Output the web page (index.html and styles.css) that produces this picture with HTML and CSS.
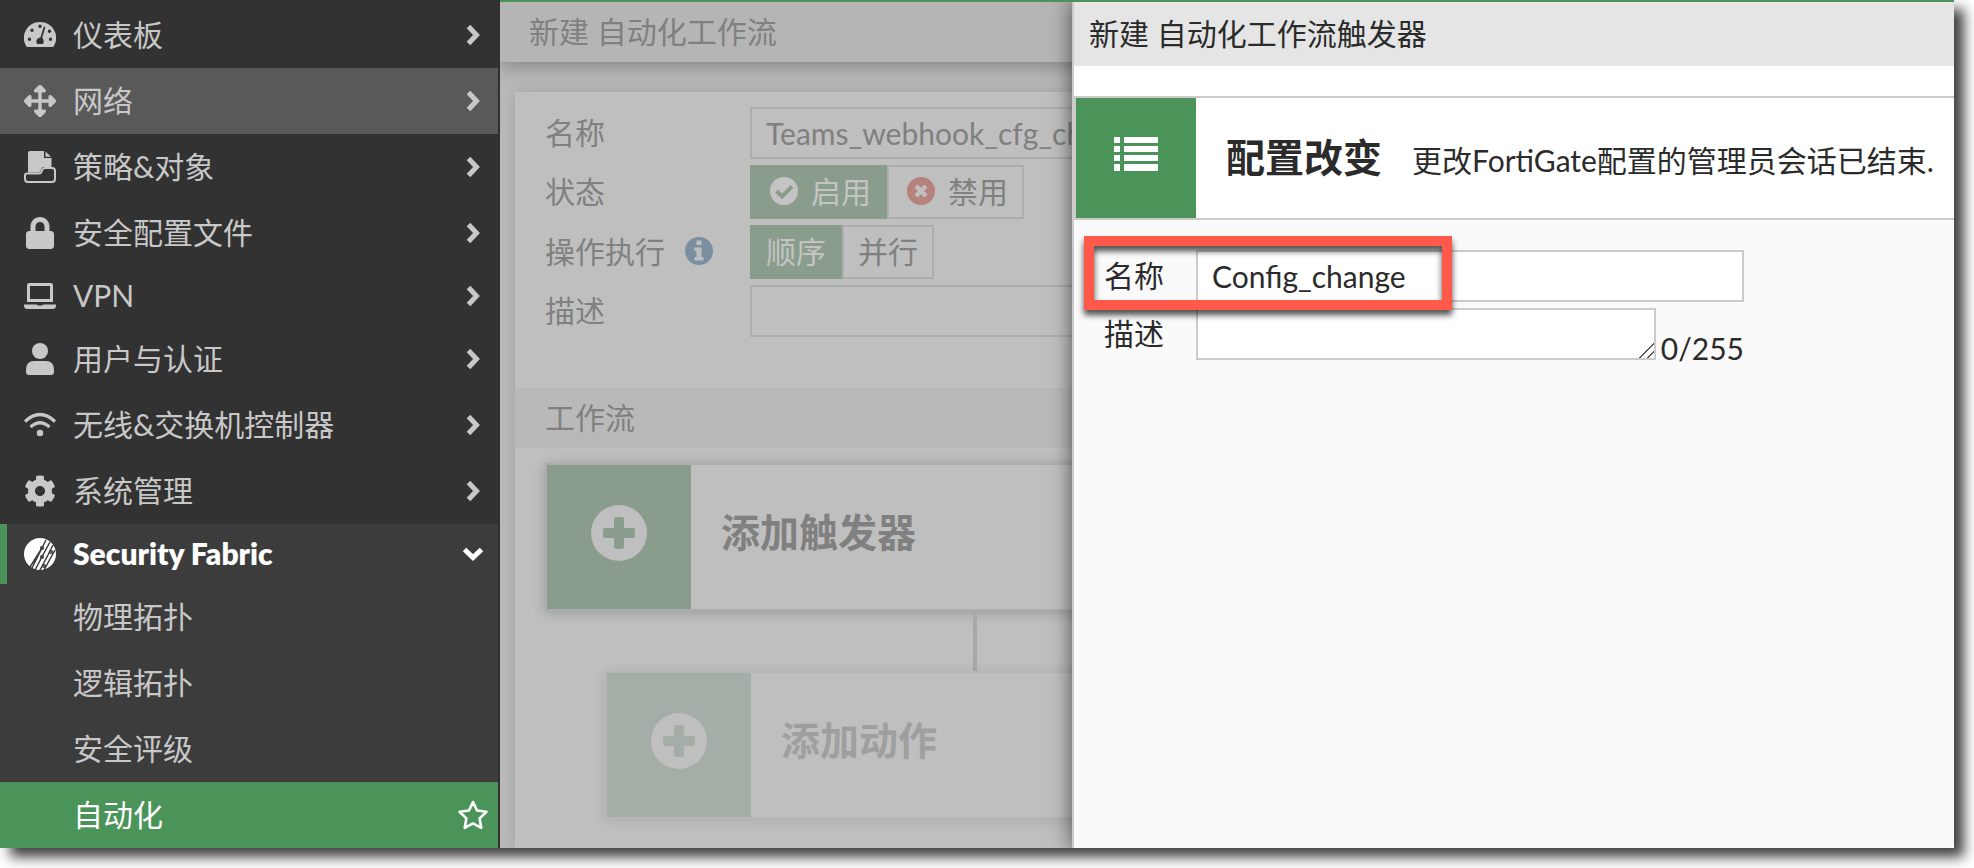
FILE: index.html
```html
<!DOCTYPE html>
<html lang="zh-CN">
	<head>
		<title>自动化</title>
		<meta charset="utf-8"/>
		<meta name="viewport" content="width=device-width, initial-scale=1">
		<link rel="stylesheet" href="styles.css">
	</head>
	<body>
		<svg class="defs" width="0" height="0">
			<symbol id="right" viewBox="0 0 16 24"><path d="M3.500 3.500L11.500 12L3.500 20.500" fill="none" stroke="currentColor" stroke-width="5"/></symbol>
			<symbol id="plus" viewBox="0 0 56 56"><path fill-rule="evenodd" d="M28 0a28 28 0 1 0 0 56a28 28 0 1 0 0-56zM25 12h6q2 0 2 2v9h9q2 0 2 2v6q0 2-2 2h-9v9q0 2-2 2h-6q-2 0-2-2v-9h-9q-2 0-2-2v-6q0-2 2-2h9v-9q0-2 2-2z"/></symbol>
		</svg>
		<div class="app">
			<nav class="sidebar">
				<a href="#" class="item">
					<svg class="icon" viewBox="0 0 32 32"><path fill-rule="evenodd" d="M16 3A16 16 0 0 0 2.200 27.200Q2.700 28 3.600 28H28.400Q29.300 28 29.800 27.200A16 16 0 0 0 16 3zM16 5.500a1.700 1.700 0 1 1 0 3.400a1.700 1.700 0 1 1 0-3.400zM8 9.500a1.700 1.700 0 1 1 0 3.400a1.700 1.700 0 1 1 0-3.400zM5.500 18.500a1.700 1.700 0 1 1 0 3.400a1.700 1.700 0 1 1 0-3.400zM25.500 10.500a1.700 1.700 0 1 1 0 3.400a1.700 1.700 0 1 1 0-3.400zM26.500 18.500a1.700 1.700 0 1 1 0 3.400a1.700 1.700 0 1 1 0-3.400zM19.800 7.600L21.400 8.100L18.200 18.800Q20 20.500 19.600 23.500Q19.400 24.500 18.800 25H13.200Q12 23 12.600 21Q13.500 18.600 16.500 18.200z"/></svg>
					<span>仪表板</span>
					<svg class="arrow"><use href="#right"/></svg>
				</a>
				<a href="#" class="item hover">
					<svg class="icon" viewBox="0 0 32 32"><path d="M16 0q1 0 1.600.6l4 4.200q1 2-1 2.700H17.700v6.800h6.800v-3q.6-2 2.700-1l4.200 4.100q1.200 1.600 0 3.200l-4.200 4.100q-2.100 1-2.700-1v-3h-6.800v6.800h3q2 .7 1 2.700l-4.100 4.200q-1.600 1.200-3.200 0l-4.100-4.200q-1-2 1-2.700h3v-6.800H7.500v3q-.6 2-2.700 1L.600 17.600q-1.200-1.600 0-3.200l4.200-4.100q2.100-1 2.700 1v3h6.800V7.500h-3q-2-.7-1-2.700L14.400.600Q15 0 16 0z"/></svg>
					<span>网络</span>
					<svg class="arrow"><use href="#right"/></svg>
				</a>
				<a href="#" class="item">
					<svg class="icon" viewBox="0 0 32 32"><path d="M4 21.500V2q0-2 2-2H20v7h7.500v9H20q-2 0-2.600 2L16.500 20q-.7 1.500-2.500 1.500z"/><path d="M21.500.500L27 5.800H21.500z"/><path d="M3 22.500h12q2 0 2.600-2l.7-1.500q.8-2 2.800-2H28q3 0 3 3v8q0 3-3 3H4q-3 0-3-3v-3.500q0-2 2-2z" fill="none" stroke="currentColor" stroke-width="2"/></svg>
					<span>策略&amp;对象</span>
					<svg class="arrow"><use href="#right"/></svg>
				</a>
				<a href="#" class="item">
					<svg class="icon" viewBox="-32 0 512 512"><path d="M400 224h-24v-72C376 68.200 307.800 0 224 0S72 68.200 72 152v72H48c-26.500 0-48 21.500-48 48v192c0 26.500 21.500 48 48 48h352c26.500 0 48-21.500 48-48V272c0-26.500-21.500-48-48-48zm-104 0H152v-72c0-39.700 32.300-72 72-72s72 32.300 72 72v72z"/></svg>
					<span>安全配置文件</span>
					<svg class="arrow"><use href="#right"/></svg>
				</a>
				<a href="#" class="item latin">
					<svg class="icon" viewBox="0 0 32 32"><path fill-rule="evenodd" d="M5.400 3h21.200q2.400 0 2.400 2.400V22H3V5.400Q3 3 5.400 3zM6 6v13h20V6zM0 24.500h13q.3 1 1.300 1h3.400q1 0 1.300-1h13v1q0 3.500-3.500 3.500h-25Q0 29 0 25.500z"/></svg>
					<span>VPN</span>
					<svg class="arrow"><use href="#right"/></svg>
				</a>
				<a href="#" class="item">
					<svg class="icon" viewBox="0 0 32 32"><circle cx="16" cy="8" r="8"/><path d="M2 27q0-9 8-9h12q8 0 8 9v2q0 3-3 3H5q-3 0-3-3z"/></svg>
					<span>用户与认证</span>
					<svg class="arrow"><use href="#right"/></svg>
				</a>
				<a href="#" class="item">
					<svg class="icon" viewBox="0 0 32 32"><g fill="none" stroke="currentColor" stroke-width="3.200"><path d="M1 12.500Q16-1.500 31 12.500"/><path d="M6.500 18Q16 9.500 25.500 18"/></g><circle cx="16" cy="24" r="3.200"/></svg>
					<span>无线&amp;交换机控制器</span>
					<svg class="arrow"><use href="#right"/></svg>
				</a>
				<a href="#" class="item">
					<svg class="icon" viewBox="0 0 512 512"><path d="M487.400 315.700l-42.600-24.600c4.300-23.200 4.300-47 0-70.200l42.600-24.600c4.900-2.800 7.100-8.600 5.500-14-11.100-35.600-30-67.800-54.700-94.600-3.800-4.100-10-5.100-14.800-2.300L380.800 110c-17.900-15.400-38.500-27.300-60.800-35.100V25.800c0-5.600-3.900-10.500-9.400-11.700-36.700-8.200-74.300-7.800-109.200 0-5.500 1.200-9.400 6.100-9.400 11.700V75c-22.200 7.900-42.800 19.800-60.800 35.100L88.700 85.500c-4.900-2.800-11-1.900-14.800 2.300-24.700 26.700-43.600 58.900-54.700 94.600-1.700 5.400.6 11.200 5.500 14L67.300 221c-4.300 23.200-4.300 47 0 70.200l-42.600 24.600c-4.900 2.800-7.100 8.600-5.500 14 11.100 35.600 30 67.800 54.700 94.600 3.800 4.100 10 5.100 14.800 2.300l42.600-24.600c17.900 15.400 38.500 27.300 60.800 35.100v49.200c0 5.600 3.900 10.500 9.400 11.700 36.700 8.200 74.300 7.800 109.200 0 5.500-1.200 9.400-6.100 9.400-11.700v-49.200c22.200-7.900 42.800-19.800 60.800-35.100l42.600 24.600c4.900 2.800 11 1.900 14.800-2.300 24.700-26.700 43.600-58.900 54.700-94.600 1.500-5.500-.7-11.300-5.600-14.100zM256 336c-44.100 0-80-35.900-80-80s35.900-80 80-80 80 35.900 80 80-35.900 80-80 80z"/></svg>
					<span>系统管理</span>
					<svg class="arrow"><use href="#right"/></svg>
				</a>
				<a href="#" class="item latin open">
					<svg class="icon" viewBox="0 0 32 32"><circle cx="16" cy="16" r="16"/><g fill="none" stroke="#3c3c3c" stroke-width="1.500"><path d="M22 2L8 30M18 10L6 29M26 4L20 15L11 32M29 7L24 17L16 32M31 12L20 32"/><circle cx="18" cy="10" r="1.300"/><circle cx="27" cy="14" r="1.300"/><circle cx="18" cy="19" r="1.300"/><circle cx="20" cy="28" r="1.300"/></g></svg>
					<span>Security Fabric</span>
					<svg class="arrow down"><use href="#right"/></svg>
				</a>
				<a href="#" class="item sub"><span>物理拓扑</span></a>
				<a href="#" class="item sub"><span>逻辑拓扑</span></a>
				<a href="#" class="item sub"><span>安全评级</span></a>
				<a href="#" class="item sub current">
					<span>自动化</span>
					<svg class="star" viewBox="0 0 32 32"><path d="M16 3L20 11.500L29.500 12.800L22.600 19.400L24.300 28.800L16 24.300L7.700 28.800L9.400 19.400L2.500 12.800L12 11.500z" fill="none" stroke="currentColor" stroke-width="2.600" stroke-linejoin="round"/></svg>
				</a>
			</nav>
			<main class="main">
				<header class="title">新建 自动化工作流</header>
				<form class="card">
					<div class="fields">
						<label for="name">名称</label>
						<input type="text" id="name" value="Teams_webhook_cfg_change">
						<span>状态</span>
						<div class="toggle">
							<button type="button" class="on"><svg viewBox="0 0 28 28"><circle cx="14" cy="14" r="14"/><path d="M6.500 14L12 19.500L22 9.500" fill="none" stroke="#8a9d8c" stroke-width="4"/></svg>启用</button>
							<button type="button"><svg class="red" viewBox="0 0 28 28"><circle cx="14" cy="14" r="14"/><path d="M9 9L19 19M19 9L9 19" fill="none" stroke="#bfbfbf" stroke-width="4.500"/></svg>禁用</button>
						</div>
						<span class="withinfo">操作执行 <svg viewBox="0 0 28 28"><circle cx="14" cy="14" r="14"/><path fill="#bfbfbf" d="M11.500 3.500h5v4.500h-5zM9.500 10.500h7v9.500h2v3.500h-9V20h2v-6h-2z"/></svg></span>
						<div class="toggle">
							<button type="button" class="on">顺序</button>
							<button type="button">并行</button>
						</div>
						<label for="desc">描述</label>
						<textarea id="desc" rows="1"></textarea>
					</div>
					<h2 class="section">工作流</h2>
					<div class="flow">
						<button type="button" class="node">
							<span class="tile"><svg><use href="#plus"/></svg></span>
							<b>添加触发器</b>
						</button>
						<div class="line"></div>
						<button type="button" class="node action">
							<span class="tile"><svg><use href="#plus"/></svg></span>
							<b>添加动作</b>
						</button>
					</div>
				</form>
				<section class="panel">
					<header class="paneltitle">新建 自动化工作流触发器</header>
					<div class="trigger">
						<span class="tile"><svg viewBox="0 0 44 34"><path d="M0 0h6v6H0zM10 0h34v6H10zM0 9h6v6H0zM10 9h34v6H10zM0 18h6v6H0zM10 18h34v6H10zM0 27h6v7H0zM10 27h34v7H10z"/></svg></span>
						<h1>配置改变</h1>
						<p>更改FortiGate配置的管理员会话已结束.</p>
					</div>
					<form class="panelform">
						<label for="tname">名称</label>
						<input type="text" id="tname" value="Config_change">
						<label for="tdesc">描述</label>
						<div class="count">
							<textarea id="tdesc" rows="1"></textarea>
							<span>0/255</span>
						</div>
						<div class="mark"></div>
					</form>
				</section>
			</main>
		</div>
	</body>
</html>
```

FILE: styles.css
```css
* {
	box-sizing: border-box;
}

body {
	margin: 0;
	padding: 0 20px 20px 0;
	background-color: white;
	font-family: Lato, "Noto Sans CJK SC", sans-serif;
	font-size: 30px;
	line-height: 44px;
	color: #2b2b2b;
	overflow: hidden;
}

input, textarea, button {
	font: inherit;
	color: inherit;
	margin: 0;
}

svg {
	fill: currentColor;
	flex: none;
}

.defs {
	position: absolute;
}

.app {
	display: flex;
	min-height: calc(100vh - 20px);
	box-shadow: 10px 9px 12px rgba(0,0,0,0.75);
}

/* left menu */
.sidebar {
	width: 500px;
	flex: none;
	padding-top: 2px;
	border-right: 2px solid #303030;
	background-color: #323232;
}

.item {
	display: flex;
	align-items: center;
	height: 66px;
	padding: 0 17px 0 24px;
	color: #c8c8c8;
	text-decoration: none;
}

.item span {
	flex: 1;
	padding-bottom: 2px;
}

.icon {
	width: 32px;
	height: 32px;
	margin-right: 17px;
}

.arrow {
	width: 16px;
	height: 24px;
}

.down {
	transform: rotate(90deg);
}

.hover {
	background-color: #595959;
}

.latin {
	height: 60px;
}

.open {
	padding-left: 17px;
	border-left: 7px solid #4a9459;
	background-color: #3c3c3c;
	color: white;
	font-weight: 800;
}

.sub {
	padding-left: 73px;
	background-color: #3c3c3c;
}

.current {
	padding-right: 9px;
	background-color: #4a9459;
	color: white;
}

.star {
	width: 32px;
	height: 32px;
}

/* dimmed page */
.main {
	flex: 1;
	min-width: 0;
	position: relative;
	overflow: hidden;
	display: flex;
	flex-direction: column;
	border-top: 2px solid #4a9459;
	background-color: #b9b9b9;
	color: #808080;
}

.title {
	height: 60px;
	padding: 7px 29px;
	background-color: #b5b5b5;
	box-shadow: 0 4px 20px rgba(0,0,0,0.3);
}

.card {
	flex: 1;
	margin: 30px 15px 0;
	background-color: #bfbfbf;
	box-shadow: 0 0 14px rgba(0,0,0,0.12);
}

.fields {
	display: grid;
	grid-template-columns: 205px 860px;
	row-gap: 6px;
	align-items: center;
	padding: 15px 30px 51px;
}

.fields label, .fields span, .panelform label {
	padding-bottom: 2px;
}

.fields input, .fields textarea {
	display: block;
	height: 52px;
	padding: 2px 14px;
	border: 2px solid #adadad;
	background-color: transparent;
	resize: none;
}

.toggle {
	display: flex;
}

.toggle button {
	display: flex;
	align-items: center;
	height: 54px;
	padding: 0 14px 2px;
	border: 2px solid #adadad;
	background-color: transparent;
}

.toggle .on {
	border-color: #8a9d8c;
	background-color: #8a9d8c;
	color: #c4c4c4;
}

.toggle svg {
	width: 28px;
	height: 28px;
	margin: 0 13px 0 4px;
}

.toggle .red {
	color: #b5827c;
}

.withinfo {
	display: flex;
	align-items: center;
	gap: 20px;
}

.withinfo svg {
	width: 28px;
	height: 28px;
	color: #7a8fa2;
}

.section {
	margin: 0;
	padding: 7px 30px 9px;
	background-color: #b9b9b9;
	font-size: 30px;
	font-weight: normal;
}

.flow {
	display: flex;
	flex-direction: column;
	align-items: center;
	width: 860px;
	margin: 15px 30px 0;
}

.node {
	display: flex;
	align-items: center;
	width: 860px;
	padding: 0;
	border: 2px solid #adadad;
	background-color: #bfbfbf;
	box-shadow: 0 2px 12px rgba(0,0,0,0.2);
	font-size: 39px;
	text-align: left;
}

.node b {
	padding-bottom: 10px;
}

.tile {
	display: flex;
	align-items: center;
	justify-content: center;
	flex: none;
	padding-bottom: 8px;
}

.node .tile {
	width: 144px;
	height: 144px;
	margin-right: 30px;
	background-color: #8a9d8c;
	color: #bfbfbf;
}

.node svg {
	width: 56px;
	height: 56px;
}

.line {
	width: 4px;
	height: 60px;
	background-color: #a8a8a8;
}

.action {
	width: 740px;
	border-color: #b6b6b6;
	box-shadow: 0 2px 12px rgba(0,0,0,0.1);
	color: #9f9f9f;
}

.action .tile {
	background-color: #a5aea6;
}

/* slide-in panel */
.panel {
	position: absolute;
	top: 0;
	right: 0;
	bottom: 0;
	left: 572px;
	border-left: 2px solid #cbcbcb;
	background-color: #fafafa;
	box-shadow: 0 0 20px rgba(0,0,0,0.6);
	color: #2b2b2b;
}

.paneltitle {
	padding: 9px 15px 11px;
	background-color: #e5e5e5;
}

.trigger {
	display: flex;
	align-items: center;
	border: 2px solid #cbcbcb;
	border-right: 0;
	background-color: white;
	box-shadow: 0 -30px 0 white;
	margin-top: 30px;
	white-space: nowrap;
}

.trigger .tile {
	width: 120px;
	height: 120px;
	background-color: #4a9459;
	color: white;
}

.trigger svg {
	width: 44px;
	height: 34px;
}

.trigger h1 {
	margin: 0 30px;
	padding-bottom: 2px;
	font-size: 39px;
}

.trigger p {
	margin: 4px 0 0;
}

.panelform {
	position: relative;
	display: grid;
	grid-template-columns: 92px 548px;
	row-gap: 6px;
	align-items: center;
	padding: 30px;
}

.panelform input, .panelform textarea {
	display: block;
	height: 52px;
	padding: 2px 14px;
	border: 2px solid #cbcbcb;
	background-color: white;
}

.count {
	display: flex;
	align-items: flex-end;
	gap: 5px;
	height: 52px;
}

.count textarea {
	flex: 1;
	min-width: 0;
}

.count textarea::-webkit-resizer {
	background: linear-gradient(135deg, transparent 48%, #555 48%, #555 56%, transparent 56%, transparent 74%, #555 74%, #555 82%, transparent 82%);
}

.count span {
	line-height: 36px;
	margin-bottom: -6px;
}

/* callout round the name field */
.mark {
	position: absolute;
	top: 16px;
	left: 10px;
	width: 368px;
	height: 74px;
	border: 10px solid #ff594b;
	filter: drop-shadow(0 5px 3px rgba(0,0,0,0.7));
	pointer-events: none;
}
```
